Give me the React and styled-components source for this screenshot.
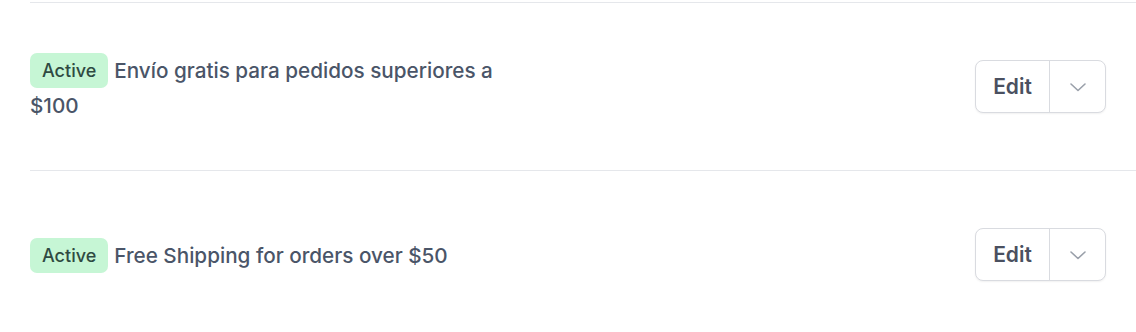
import React from "react";
import styled, { createGlobalStyle } from "styled-components";

const Global = createGlobalStyle`
  html, body { margin: 0; padding: 0; background: #ffffff; }
  body { font-family: Inter, "Noto Sans", sans-serif; -webkit-font-smoothing: antialiased; }
`;

const List = styled.div`
  padding: 2px 0 0 30px;
  display: flex;
  flex-direction: column;
`;

const Row = styled.div`
  border-top: 1px solid #e5e7eb;
  min-height: 167px;
  padding-right: 30px;
  display: flex;
  align-items: center;
  justify-content: space-between;
`;

const Title = styled.div`
  max-width: 480px;
  margin-top: 4px;
  font-size: 20.7px;
  font-weight: 500;
  line-height: 34px;
  color: #4a5568;
`;

const Badge = styled.span`
  display: inline-block;
  vertical-align: middle;
  height: 35px;
  line-height: 35px;
  padding: 0 12px;
  margin-right: 6px;
  border-radius: 7px;
  background: #c6f6d5;
  color: #2f4a42;
  font-size: 18px;
  font-weight: 500;
  position: relative;
  top: -1px;
`;

const Group = styled.div`
  display: flex;
  height: 53px;
  border: 1px solid #d9dbe0;
  border-radius: 8px;
  box-shadow: 0 1px 2px rgba(0, 0, 0, 0.06);
  background: #fff;
  overflow: hidden;
  box-sizing: border-box;
`;

const EditButton = styled.button`
  width: 74px;
  border: none;
  border-right: 1px solid #d9dbe0;
  background: transparent;
  font-family: inherit;
  font-size: 21px;
  font-weight: 600;
  color: #4a5060;
  padding: 0;
  cursor: pointer;
`;

const ToggleButton = styled.button`
  width: 55px;
  border: none;
  background: transparent;
  padding: 0;
  display: flex;
  align-items: center;
  justify-content: center;
  cursor: pointer;
`;

const Chevron = () => (
  <svg width="20" height="20" viewBox="0 0 20 20" fill="none">
    <path d="M3 7 L10 13.5 L17 7" stroke="#9aa0aa" strokeWidth="1.6" strokeLinecap="round" strokeLinejoin="round" />
  </svg>
);

const rules = [
  "Envío gratis para pedidos superiores a $100",
  "Free Shipping for orders over $50",
];

export default function App() {
  return (
    <>
      <Global />
      <List>
        {rules.map((r) => (
          <Row key={r}>
            <Title>
              <Badge>Active</Badge>
              {r}
            </Title>
            <Group>
              <EditButton>Edit</EditButton>
              <ToggleButton aria-label="More">
                <Chevron />
              </ToggleButton>
            </Group>
          </Row>
        ))}
      </List>
    </>
  );
}
